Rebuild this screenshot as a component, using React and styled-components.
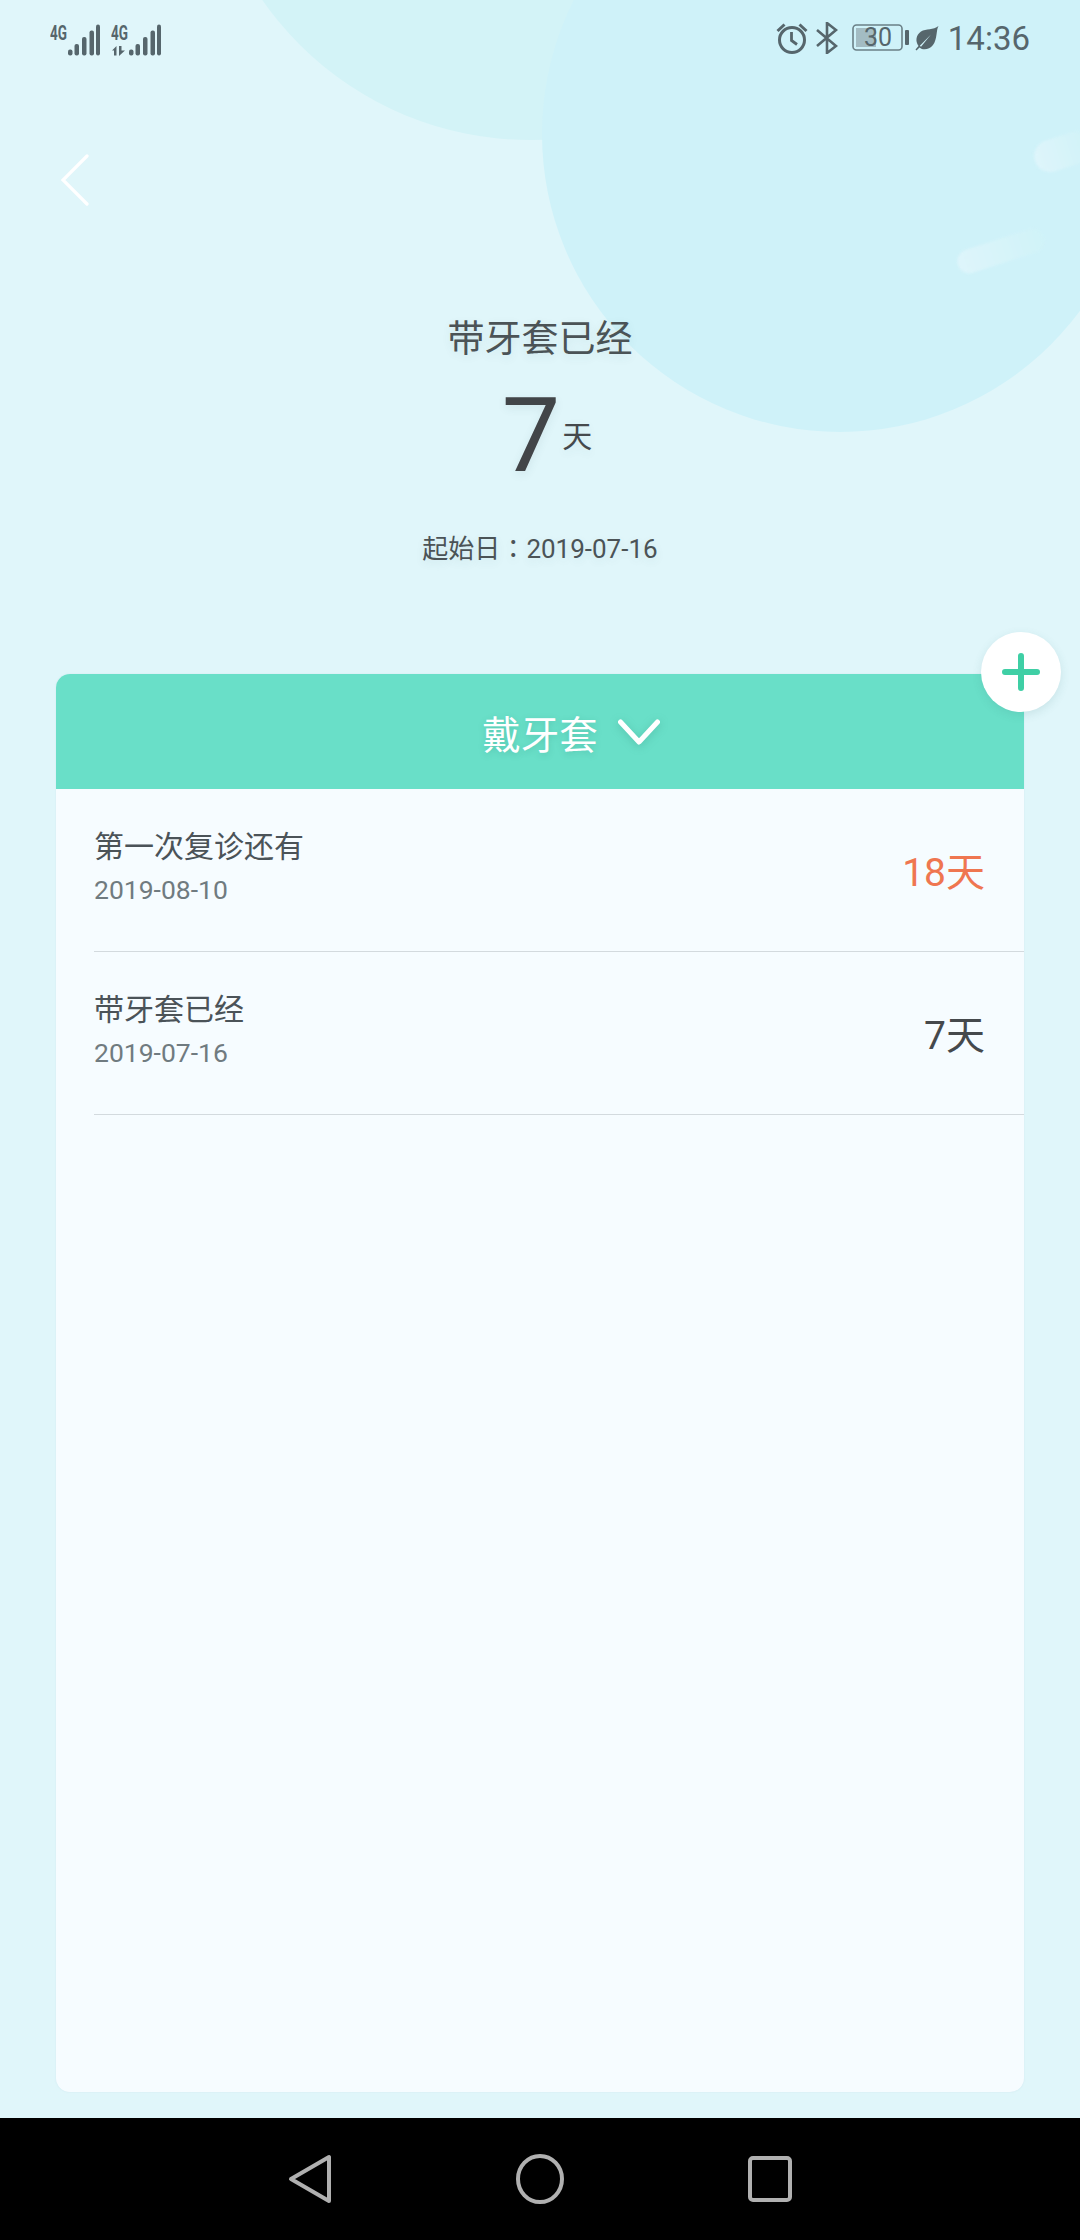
import styled, { createGlobalStyle } from 'styled-components';

const GlobalStyle = createGlobalStyle`
  html, body {
    margin: 0;
    padding: 0;
    background: #000;
  }
  * {
    box-sizing: border-box;
  }
`;

const Page = styled.div`
  width: 1080px;
  height: 2240px;
  display: flex;
  flex-direction: column;
  overflow: hidden;
  font-family: Roboto, "Noto Sans CJK SC", sans-serif;
`;

const Screen = styled.main`
  position: relative;
  flex: 1;
  display: flex;
  flex-direction: column;
  overflow: hidden;
  background: #e0f6fa;
`;

const Bubble = styled.div`
  position: absolute;
  border-radius: 50%;
  left: ${(p) => p.$x - p.$r}px;
  top: ${(p) => p.$y - p.$r}px;
  width: ${(p) => p.$r * 2}px;
  height: ${(p) => p.$r * 2}px;
  background: ${(p) => p.$color};
`;

const Streak = styled.div`
  position: absolute;
  left: ${(p) => p.$x}px;
  top: ${(p) => p.$y}px;
  width: ${(p) => p.$w}px;
  height: ${(p) => p.$h}px;
  border-radius: ${(p) => p.$h / 2}px;
  transform: rotate(-18deg);
  transform-origin: left center;
  background: linear-gradient(90deg, #def5fb 0%, #d0f3f8 100%);
  filter: blur(1px);
`;

const StatusBar = styled.header`
  position: relative;
  height: 76px;
  display: flex;
  align-items: center;
  justify-content: space-between;
  padding: 0 50px;
  color: #56666c;
`;

const StatusGroup = styled.div`
  display: flex;
  align-items: center;
`;

const SignalGap = styled.span`
  width: 11px;
`;

const Clock = styled.span`
  margin-left: 9px;
  font-size: 33px;
  line-height: 1;
`;

const BackRow = styled.div`
  position: relative;
  height: 208px;
  display: flex;
  align-items: center;
  padding-left: 60px;
`;

const Summary = styled.section`
  position: relative;
  height: 390px;
  padding-top: 31px;
  display: flex;
  flex-direction: column;
  align-items: center;
  color: #45494c;
  text-shadow: 0 3px 10px rgba(60, 90, 100, 0.1);
`;

const SummaryTitle = styled.h1`
  margin: 0;
  font-size: 37px;
  line-height: 50px;
  font-weight: 400;
  color: #4b5356;
`;

const Count = styled.div`
  display: flex;
  align-items: baseline;
  gap: 2px;
  height: 104px;
  margin-top: 19px;
  padding-left: 14px;
`;

const CountNumber = styled.span`
  font-size: 104px;
  line-height: 104px;
  color: #424548;
`;

const CountUnit = styled.span`
  font-size: 30px;
  position: relative;
  top: -24px;
`;

const StartDate = styled.p`
  margin: 41px 0 0;
  font-size: 26px;
  line-height: 36px;
  color: #4b5356;
`;

const Colon = styled.span`
  font-family: "Noto Sans CJK TC", sans-serif;
`;

const Card = styled.section`
  position: relative;
  flex: 1;
  margin: 0 56px 26px;
  border-radius: 14px;
  background: #f6fcff;
  box-shadow: 0 0 2px rgba(110, 150, 170, 0.14);
`;

const CardHeader = styled.div`
  height: 115px;
  display: grid;
  grid-template-columns: 1fr auto 1fr;
  align-items: center;
  gap: 20px;
  border-radius: 14px 14px 0 0;
  background: #69dfc8;
  color: #fff;
`;

const CardTitle = styled.h2`
  grid-column: 2;
  margin: 0;
  font-size: 38.5px;
  font-weight: 400;
  text-shadow: 0 2px 6px rgba(40, 130, 110, 0.25);
`;

const Chevron = styled.svg`
  display: block;
  filter: drop-shadow(0 2px 4px rgba(40, 130, 110, 0.3));
`;

const AddButton = styled.button`
  position: absolute;
  right: -37px;
  top: -42px;
  width: 80px;
  height: 80px;
  padding: 0;
  border: 0;
  border-radius: 50%;
  display: flex;
  align-items: center;
  justify-content: center;
  background: #fff;
  box-shadow: 0 3px 10px rgba(60, 120, 120, 0.14);
`;

const Row = styled.div`
  height: 163px;
  margin-left: 38px;
  padding-right: 39px;
  display: flex;
  align-items: center;
  justify-content: space-between;
  border-bottom: 1px solid #d3dade;
`;

const RowText = styled.div`
  display: flex;
  flex-direction: column;
  gap: 5px;
  padding-bottom: 6px;
`;

const RowTitle = styled.div`
  font-size: 30px;
  line-height: 40px;
  color: #4b5358;
`;

const RowDate = styled.div`
  font-size: 26.5px;
  line-height: 36px;
  color: #707b80;
`;

const RowValue = styled.div`
  font-size: 39px;
  padding-bottom: 3px;
  color: ${(p) => (p.$accent ? '#ef7650' : '#45494c')};
`;

const NavBar = styled.nav`
  height: 122px;
  display: flex;
  align-items: center;
  justify-content: center;
  gap: 184px;
  background: #000;
`;

const BluetoothIcon = styled.svg`
  margin-left: 8px;
`;

const BatteryIcon = styled.svg`
  margin-left: 14px;
`;

const LeafIcon = styled.svg`
  margin-left: 5px;
`;

const Signal = ({ arrows }) => (
  <svg width="50" height="40" viewBox="0 -6 50 40" fill="#56666c">
    <text x="0" y="15.500" fontSize="21" fontWeight="700" fontFamily="Roboto" textLength="17" lengthAdjust="spacingAndGlyphs">
      4G
    </text>
    {arrows && <path d="M1 26.500l4.500-4.500v9.500H3v-5zM8 22h2.500v4.500h3.500L8 32z" />}
    <rect x="18" y="25.500" width="4.500" height="6" rx="2" />
    <rect x="24.500" y="20" width="4.500" height="11.500" rx="2" />
    <rect x="32" y="13" width="4.500" height="18.500" rx="2" />
    <rect x="39.500" y="6.500" width="4.500" height="25" rx="2" />
    <rect x="46" y="0.500" width="4" height="31" rx="2" />
  </svg>
);

const Alarm = () => (
  <svg width="32" height="32" viewBox="0 0 32 32" fill="none" stroke="#56666c" strokeWidth="3">
    <circle cx="16" cy="18" r="12.500" />
    <path d="M15.500 10v8.500l5.500 4" strokeWidth="2.800" />
    <path d="M1.500 9 8.500 2.500M30.500 9 23.500 2.500" strokeWidth="3" />
  </svg>
);

const Bluetooth = () => (
  <BluetoothIcon width="22" height="32" viewBox="0 0 22 32" fill="none" stroke="#56666c" strokeWidth="2.600">
    <path d="M1 8l19 16-9 7V1l9 7L1 24" />
  </BluetoothIcon>
);

const Battery = () => (
  <BatteryIcon width="58" height="30" viewBox="0 0 58 30">
    <rect x="1" y="2" width="49" height="25" rx="3.500" fill="none" stroke="#6b8087" strokeWidth="1.600" />
    <rect x="4" y="5" width="20" height="19" fill="#a3bcc3" />
    <rect x="53" y="7" width="4" height="15" rx="1" fill="#56666c" />
    <text x="26" y="23" textAnchor="middle" fontSize="25" fontFamily="Roboto" fill="#56666c">
      30
    </text>
  </BatteryIcon>
);

const Leaf = () => (
  <LeafIcon width="24" height="26" viewBox="0 0 24 26" fill="#56666c">
    <path d="M23.500 1C21 5 22.500 14 18 20 14 25 8 25.500 4.500 22.500L1.500 25.500 0.500 24.500 3.500 21C0 16 1 10 6 6.500 11 3.500 18.500 5 23.500 1ZM4.800 20.800 16 9.500 6 21.800Z" fillRule="evenodd" />
  </LeafIcon>
);

const rows = [
  { title: '第一次复诊还有', date: '2019-08-10', value: '18天', accent: true },
  { title: '带牙套已经', date: '2019-07-16', value: '7天' },
];

const App = () => (
  <Page>
    <GlobalStyle />
    <Screen>
      <Bubble $x={530} $y={-186} $r={326} $color="#d3f3f7" />
      <Bubble $x={840} $y={134} $r={298} $color="#cff2f9" />
      <Streak $x={958} $y={253} $w={90} $h={24} />
      <Streak $x={1035} $y={145} $w={60} $h={32} />

      <StatusBar>
        <StatusGroup>
          <Signal />
          <SignalGap />
          <Signal arrows />
        </StatusGroup>
        <StatusGroup>
          <Alarm />
          <Bluetooth />
          <Battery />
          <Leaf />
          <Clock>14:36</Clock>
        </StatusGroup>
      </StatusBar>

      <BackRow>
        <svg width="30" height="52" viewBox="0 0 30 52" fill="none" stroke="#fff" strokeWidth="3.200" strokeLinecap="round">
          <path d="M27 2 3 26l24 24" />
        </svg>
      </BackRow>

      <Summary>
        <SummaryTitle>带牙套已经</SummaryTitle>
        <Count>
          <CountNumber>7</CountNumber>
          <CountUnit>天</CountUnit>
        </Count>
        <StartDate>
          起始日<Colon>：</Colon>2019-07-16
        </StartDate>
      </Summary>

      <Card>
        <CardHeader>
          <CardTitle>戴牙套</CardTitle>
          <Chevron width="44" height="28" viewBox="0 0 44 28" fill="none" stroke="#fff" strokeWidth="5" strokeLinecap="round" strokeLinejoin="round">
            <path d="M2.500 4l18.500 20L39.500 4" />
          </Chevron>
        </CardHeader>
        <AddButton type="button" aria-label="添加">
          <svg width="38" height="38" viewBox="0 0 38 38" fill="none" stroke="#3fcfa5" strokeWidth="6" strokeLinecap="round">
            <path d="M19 3v32M3 19h32" />
          </svg>
        </AddButton>
        {rows.map((row) => (
          <Row key={row.title}>
            <RowText>
              <RowTitle>{row.title}</RowTitle>
              <RowDate>{row.date}</RowDate>
            </RowText>
            <RowValue $accent={row.accent}>{row.value}</RowValue>
          </Row>
        ))}
      </Card>
    </Screen>

    <NavBar>
      <svg width="44" height="50" viewBox="0 0 44 50" fill="none" stroke="#b0b0b0" strokeWidth="4" strokeLinejoin="round">
        <path d="M41 3v44L3 25z" />
      </svg>
      <svg width="48" height="50" viewBox="0 0 48 50" fill="none" stroke="#b0b0b0" strokeWidth="4">
        <ellipse cx="24" cy="25" rx="22" ry="23" />
      </svg>
      <svg width="44" height="46" viewBox="0 0 44 46" fill="none" stroke="#b0b0b0" strokeWidth="4">
        <rect x="2" y="2" width="40" height="42" rx="3" />
      </svg>
    </NavBar>
  </Page>
);

export default App;
